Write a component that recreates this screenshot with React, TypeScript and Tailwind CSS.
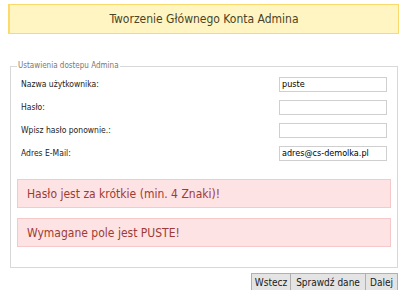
import React from "react";

const font = { fontFamily: '"DejaVu Sans Condensed", "Liberation Sans", sans-serif' };

function Row({ label, value }: { label: string; value?: string }) {
  return (
    <div className="flex items-center justify-between h-[15px]">
      <span className="text-[8.5px] text-[#222]">{label}</span>
      <div className="w-[108px] h-[15px] border border-[#cfcfcf] bg-white flex items-center px-[2px] text-[9px] text-black leading-none whitespace-nowrap overflow-hidden">
        {value}
      </div>
    </div>
  );
}

export default function App() {
  return (
    <div className="w-[400px] h-[290px] bg-white relative overflow-hidden" style={font}>
      <div className="ml-[8px] mt-[4px] w-[391px] h-[30px] bg-[#fff5c3] border border-[#fbd96a] border-l-2 flex items-center justify-center text-[12px] text-[#4a4426]">
        Tworzenie Głównego Konta Admina
      </div>
      <fieldset className="ml-[10px] mt-[26px] w-[388px] h-[208px] border border-[#d8d8d8] px-[6px] pb-[20px]">
        <legend className="ml-0 px-[1px] text-[8px] text-[#777]">Ustawienia dostepu Admina</legend>
        <div className="flex flex-col gap-[8px] px-[4px] pr-[4px] mt-[5px]">
          <Row label="Nazwa użytkownika:" value="puste" />
          <Row label="Hasło:" />
          <Row label="Wpisz hasło ponownie.:" />
          <Row label="Adres E-Mail:" value="adres@cs-demolka.pl" />
        </div>
        <div className="flex flex-col gap-[10px] mt-[18px]">
          <div className="h-[29px] bg-[#fde3e3] border border-[#f5c9c9] flex items-center px-[9px] text-[12px] text-[#9e3b36]">
            Hasło jest za krótkie (min. 4 Znaki)!
          </div>
          <div className="h-[29px] bg-[#fde3e3] border border-[#f5c9c9] flex items-center px-[9px] text-[12px] text-[#9e3b36]">
            Wymagane pole jest PUSTE!
          </div>
        </div>
      </fieldset>
      <div className="flex justify-end mt-[5px] pr-[2px]">
        <button className="w-[40px] h-[18px] bg-[#e4e4e4] border border-[#b0b0b0] text-[10px] text-[#1a1a1a] flex items-center justify-center">Wstecz</button>
        <button className="w-[75px] h-[18px] bg-[#e4e4e4] border border-l-0 border-[#b0b0b0] text-[10px] text-[#1a1a1a] flex items-center justify-center">Sprawdź dane</button>
        <button className="w-[32px] h-[18px] bg-[#e4e4e4] border border-l-0 border-[#b0b0b0] text-[10px] text-[#1a1a1a] flex items-center justify-center">Dalej</button>
      </div>
    </div>
  );
}
